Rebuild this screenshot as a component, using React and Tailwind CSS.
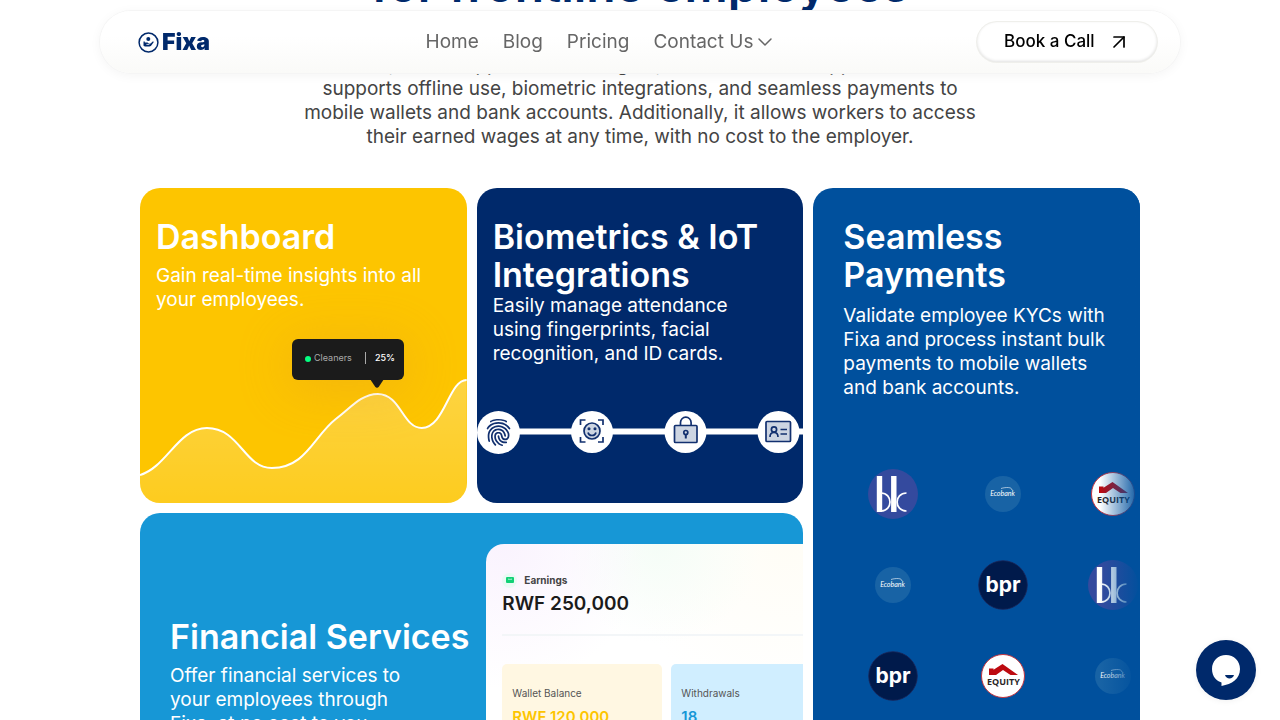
import { ChevronDown, ArrowUpRight } from "lucide-react";
import { IoFingerPrint } from "react-icons/io5";

function Logo() {
  return (
    <a href="#" aria-label="Fixa" className="flex w-[88px] items-center gap-[3px] text-[#00296b]">
      <svg className="h-[21px] w-[21px] shrink-0" viewBox="0 0 21 21" fill="none" aria-hidden="true">
        <circle cx="10.5" cy="10.5" r="9.4" stroke="currentColor" strokeWidth="1.5" />
        <circle cx="10.3" cy="7" r="2" fill="currentColor" />
        <path d="M5.500 9.500h1.300v1h2.700l1.600 1.300 1.500-.2 2.400-2.300.8.700-2.900 3.900-1.500.6H7L5.500 13.800Z" fill="currentColor" />
        <path d="M8.400 12.400h3" stroke="#fff" strokeWidth=".8" />
      </svg>
      <span className="text-[23px] leading-6 font-black">Fixa</span>
    </a>
  );
}

function Header() {
  return (
    <header className="fixed inset-x-0 top-[11px] z-20 mx-auto flex h-[62px] w-full max-w-[1080px] items-center justify-between rounded-full bg-linear-to-b from-white from-40% to-[#fafaf8] pr-[23px] pl-[38px] shadow-[0_0_0_1px_#f5f5f5,0_2px_12px_rgba(0,0,0,0.05)]">
      <Logo />
      <nav className="flex items-center gap-6 text-[19px] leading-6 text-[#666]">
        <a href="#">Home</a>
        <a href="#">Blog</a>
        <a href="#">Pricing</a>
        <button type="button" className="flex items-center">
          Contact Us
          <ChevronDown className="h-6 w-6" strokeWidth={1.5} aria-hidden="true" />
        </button>
      </nav>
      <button
        type="button"
        className="flex h-10 w-[180px] items-center gap-3 rounded-full bg-white pl-[27px] text-[17px] font-medium text-black shadow-[inset_0_-1px_3px_rgba(0,0,0,0.12),0_0_0_1px_#efefeb]"
      >
        Book a Call
        <ArrowUpRight className="h-6 w-6" strokeWidth={1.7} aria-hidden="true" />
      </button>
    </header>
  );
}

function CardTitle({ children }) {
  return <h3 className="text-[34px] leading-[38px] font-semibold">{children}</h3>;
}

function DashboardCard() {
  return (
    <article className="relative flex h-[315px] flex-col overflow-hidden rounded-[20px] bg-[#fdc500] px-4 pt-[30px] text-white">
      <CardTitle>Dashboard</CardTitle>
      <p className="mt-2 text-[19px] leading-6 whitespace-nowrap">
        Gain real-time insights into all
        <br />
        your employees.
      </p>
      <svg className="absolute inset-x-0 bottom-0 h-[125px] w-full" viewBox="0 0 327 125" preserveAspectRatio="none" fill="none" aria-hidden="true">
        <defs>
          <linearGradient id="wave" x1="0" y1="0" x2="0" y2="1">
            <stop offset="0" stopColor="#fff" stopOpacity=".26" />
            <stop offset="1" stopColor="#fff" stopOpacity=".12" />
          </linearGradient>
        </defs>
        <path d="M0 97C27 89 38 50 67 50c33 0 37 40 65 40 34 0 42-32 64-49 14-10 25-25 42-25 23 0 25 34 44 34 23 0 27-48 45-48v123H0Z" fill="url(#wave)" />
        <path d="M0 97C27 89 38 50 67 50c33 0 37 40 65 40 34 0 42-32 64-49 14-10 25-25 42-25 23 0 25 34 44 34 23 0 27-48 45-48" stroke="#fff" strokeWidth="2" />
      </svg>
      <div className="absolute top-[151px] left-[152px] flex h-[41px] w-[112px] items-center rounded-[6px] bg-[#1b1b1b] pb-[3px] pl-[13px] text-[9px] shadow-[0_6px_50px_4px_rgba(225,150,40,0.32)]">
        <span className="mt-[2px] mr-[3px] h-[6px] w-[6px] rounded-full bg-[#05ff82]" />
        <span className="w-12 text-[#aaa]">Cleaners</span>
        <span className="mr-[9px] ml-[3px] h-3 w-px bg-[#aaa]" />
        <span className="font-medium">25%</span>
        <svg className="absolute top-10 left-[78px] h-[9px] w-[14px]" viewBox="0 0 14 9" aria-hidden="true">
          <path d="M0 0h14L9 7.5Q7 10 5 7.5Z" fill="#1b1b1b" />
        </svg>
      </div>
    </article>
  );
}

function BiometricsStrip() {
  return (
    <svg className="absolute top-[222px] left-0 h-11 w-full" viewBox="0 0 327 44" preserveAspectRatio="xMinYMid slice" fill="none" stroke="#12306f" strokeWidth="1.7" aria-hidden="true">
      <path d="M22 21.5h305" stroke="#fff" strokeWidth="6" />
      <g fill="#fff" stroke="none">
        <circle cx="21.5" cy="22.5" r="21.5" />
        <circle cx="115" cy="22" r="21" />
        <circle cx="208.500" cy="22" r="21" />
        <circle cx="301.500" cy="22" r="21" />
      </g>
      <IoFingerPrint x="7" y="8" size={29} color="#12306f" />
      <g>
        <path d="M103.500 15v-5h5M121 10h5v5M126 27v5h-5M108.500 32h-5v-5" />
        <circle cx="115" cy="21" r="8" fill="#cdd5e2" />
        <path d="M111 22.500c1 4 7 4 8 0" />
        <circle cx="112" cy="18.700" r=".7" />
        <circle cx="118" cy="18.700" r=".7" />
      </g>
      <g>
        <rect x="197.500" y="15.500" width="22.500" height="17" rx="1" fill="#cdd5e2" />
        <path d="M203.500 15v-2.500a5.300 5.300 0 0 1 10.600 0V15" />
        <circle cx="208.800" cy="22.500" r="2" />
        <path d="M208.800 24.500v4" strokeWidth="2" />
      </g>
      <g>
        <rect x="289" y="11.500" width="24.500" height="20" rx="1" fill="#cdd5e2" />
        <circle cx="297" cy="19.500" r="2.600" />
        <path d="M293 27c0-6 8-6 8 0M303.500 19.500h6.500M303.500 24h6.500" />
      </g>
    </svg>
  );
}

function BiometricsCard() {
  return (
    <article className="relative h-[315px] overflow-hidden rounded-[20px] bg-[#00296b] px-4 pt-[30px] text-white">
      <CardTitle>
        Biometrics & IoT
        <br />
        Integrations
      </CardTitle>
      <p className="text-[19px] leading-6 whitespace-nowrap">
        Easily manage attendance
        <br />
        using fingerprints, facial
        <br />
        recognition, and ID cards.
      </p>
      <BiometricsStrip />
    </article>
  );
}

function BankOfKigali() {
  return (
    <svg className="h-[50px] w-[50px]" viewBox="0 0 50 50" fill="none" role="img" aria-label="BK">
      <circle cx="25" cy="25" r="25" fill="#344a9e" />
      <path d="M11.500 7v36M25.800 7v36" stroke="#fff" strokeWidth="5.400" />
      <path d="M13 24c12 0 12 18 0 18M38.500 24c-12.500 0-12.500 18 0 18" stroke="#fff" strokeWidth="1.700" />
    </svg>
  );
}

function Ecobank() {
  return (
    <svg className="h-9 w-9" viewBox="0 0 36 36" role="img" aria-label="Ecobank">
      <circle cx="18" cy="18" r="18" fill="#1863a5" />
      <text x="17.500" y="19.500" textAnchor="middle" fill="#fff" fontFamily="Lato, sans-serif" fontStyle="italic" fontSize="7">Ecobank</text>
      <path d="M16 12.500c5-1.500 11-1.500 11 1.500" stroke="#fff" strokeWidth=".6" fill="none" />
    </svg>
  );
}

function Equity() {
  return (
    <svg className="h-11 w-11" viewBox="0 0 44 44" role="img" aria-label="Equity">
      <circle cx="22" cy="22" r="21.500" fill="#fff" stroke="#c6353f" />
      <path d="M8 14.500h4.500v1.200L21.500 10 37 21H29.500L22 16l-7 5H8Z" fill="#bd0a10" />
      <text x="22.500" y="30.500" textAnchor="middle" fill="#2a2526" fontFamily="Open Sans, sans-serif" fontWeight="700" fontSize="9">EQUITY</text>
    </svg>
  );
}

function Bpr() {
  return (
    <svg className="h-[50px] w-[50px]" viewBox="0 0 50 50" role="img" aria-label="bpr">
      <circle cx="25" cy="25" r="24.300" fill="#001a4b" stroke="#1b2457" strokeWidth=".8" />
      <text x="25" y="31.500" textAnchor="middle" fill="#fff" fontFamily="Inter, sans-serif" fontWeight="700" fontSize="21">bpr</text>
    </svg>
  );
}

function PaymentsCard() {
  return (
    <article className="relative row-span-2 flex flex-col overflow-hidden rounded-[20px] bg-[#00509d] pt-[30px] text-white">
      <div className="pl-[30px]">
        <CardTitle>
          Seamless
          <br />
          Payments
        </CardTitle>
        <p className="mt-[10px] text-[19px] leading-6 whitespace-nowrap">
          Validate employee KYCs with
          <br />
          Fixa and process instant bulk
          <br />
          payments to mobile wallets
          <br />
          and bank accounts.
        </p>
      </div>
      <div className="mt-12 ml-[25px] grid grid-cols-[repeat(3,110px)] auto-rows-[91px] place-items-center">
        <BankOfKigali />
        <Ecobank />
        <Equity />
        <Ecobank />
        <Bpr />
        <BankOfKigali />
        <Bpr />
        <Equity />
        <Ecobank />
      </div>
      <div className="absolute inset-y-0 right-0 w-10 bg-linear-to-r from-transparent to-[#00509d]" />
    </article>
  );
}

function FinancialCard() {
  return (
    <article className="col-span-2 flex h-[315px] overflow-hidden rounded-[20px] bg-[#1797d6] pl-[30px] text-white">
      <div className="min-w-0 flex-1 pt-[105px] whitespace-nowrap">
        <CardTitle>Financial Services</CardTitle>
        <p className="mt-2 text-[19px] leading-6">
          Offer financial services to
          <br />
          your employees through
          <br />
          Fixa, at no cost to you.
        </p>
      </div>
      <div className="mt-[31px] w-[317px] shrink-0 overflow-hidden rounded-tl-[18px] bg-white bg-[radial-gradient(circle_at_5%_0%,#faf3fe_0%,transparent_35%),radial-gradient(circle_at_55%_0%,#f5fdf7_0%,transparent_30%),radial-gradient(circle_at_95%_0%,#fffdf6_0%,transparent_40%)] pt-7 pl-4 text-[#1b1b1b]">
        <div className="flex items-center gap-[7px]">
          <span className="flex h-[15px] w-[15px] items-center justify-center rounded-full bg-[#eafaf4]">
            <svg className="h-[6px] w-2" viewBox="0 0 8 6" aria-hidden="true">
              <rect width="8" height="6" rx="1" fill="#12d176" />
              <path d="M2 2.200h1.500q.5 1 1 0H6" stroke="#fff" strokeWidth=".7" fill="none" />
            </svg>
          </span>
          <span className="text-[10px] leading-4 font-bold text-[#444]">Earnings</span>
        </div>
        <p className="mt-1 text-[19px] leading-6 font-semibold">RWF 250,000</p>
        <div className="mt-[18px] h-[2px] bg-[#f3f6f8]" />
        <div className="mt-7 flex gap-[9px] whitespace-nowrap">
          <div className="h-[110px] w-40 shrink-0 rounded-[5px] bg-[#fff7e2] px-[10px] pt-[21px]">
            <p className="text-[10px] leading-4 text-[#555]">Wallet Balance</p>
            <p className="mt-[6px] text-[15px] leading-5 font-semibold text-[#fdc500]">RWF 120,000</p>
          </div>
          <div className="h-[110px] w-40 shrink-0 rounded-[5px] bg-[#d0eeff] px-[10px] pt-[21px]">
            <p className="text-[10px] leading-4 text-[#555]">Withdrawals</p>
            <p className="mt-[6px] text-[15px] leading-5 font-semibold text-[#1797d6]">18</p>
          </div>
        </div>
      </div>
    </article>
  );
}

export default function App() {
  return (
    <div className="h-screen overflow-x-hidden overflow-y-auto bg-white font-['Inter',sans-serif] [scrollbar-width:none]">
      <Header />
      <main className="mx-auto max-w-[1000px] pb-10">
        <section className="-mt-[43px] text-center">
          <h2 className="text-[48px] leading-[56px] font-semibold text-[#00296b]">for frontline employees</h2>
          <p className="mt-10 text-[19px] leading-6 whitespace-nowrap text-[#444]">
            USSD, mobile app and web insights, the Fixa solution app and more
            <br />
            supports offline use, biometric integrations, and seamless payments to
            <br />
            mobile wallets and bank accounts. Additionally, it allows workers to access
            <br />
            their earned wages at any time, with no cost to the employer.
          </p>
        </section>
        <section className="mt-[39px] grid grid-cols-3 gap-[10px]">
          <DashboardCard />
          <BiometricsCard />
          <PaymentsCard />
          <FinancialCard />
        </section>
      </main>
      <button
        type="button"
        aria-label="Open chat"
        className="fixed right-6 bottom-5 z-20 flex h-[60px] w-[60px] items-center justify-center rounded-full bg-[#00296b] shadow-[0_1px_6px_rgba(0,0,0,0.06)]"
      >
        <svg className="h-8 w-8" viewBox="0 0 32 32" aria-hidden="true">
          <path d="M16 1C8 1 2 7 2 15s5 12 9.500 13.500V32C22 30 30 25 30 15 30 7 24 1 16 1Z" fill="#fff" />
          <path d="M15 21h9c-1 4.500-8 4.500-9 0Z" fill="#00296b" />
        </svg>
      </button>
    </div>
  );
}
